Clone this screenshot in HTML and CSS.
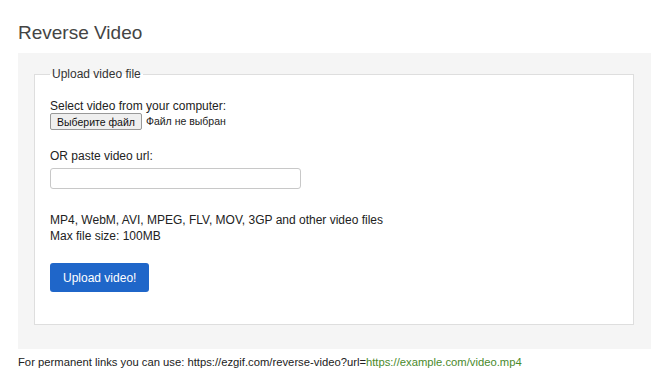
FILE: index.html
```html
<!DOCTYPE html>
<html lang="en">
<head>
  <meta charset="UTF-8" />
  <meta name="viewport" content="width=device-width, initial-scale=1.0" />
  <title>Reverse Video</title>
  <link rel="stylesheet" href="styles.css">
</head>
<body>
  <h1>Reverse Video</h1>
  <div class="panel">
    <fieldset>
      <legend>Upload video file</legend>
      <p class="label">Select video from your computer:</p>
      <div class="file-row">
        <button type="button" class="file-btn">Выберите файл</button>
        <span class="file-name">Файл не выбран</span>
      </div>
      <p class="label url-label">OR paste video url:</p>
      <input type="text" class="url-input" />
      <p class="formats">MP4, WebM, AVI, MPEG, FLV, MOV, 3GP and other video files<br>Max file size: 100MB</p>
      <button type="submit" class="upload-btn">Upload video!</button>
    </fieldset>
  </div>
  <p class="permalink">For permanent links you can use: https://ezgif.com/reverse-video?url=<a href="#">https://example.com/video.mp4</a></p>
</body>
</html>
```

FILE: styles.css
```css
html, body {
  margin: 0;
  padding: 0;
  background: #fff;
  font-family: 'Liberation Sans', Arial, sans-serif;
  font-size: 12px;
  color: #222;
}
body {
  padding: 0 13px 0 18px;
}
h1 {
  margin: 21px 0 9px;
  font-size: 19px;
  line-height: 23px;
  font-weight: normal;
  color: #444;
}
.panel {
  background-color: #f5f5f5;
  padding: 14px 17px 24px 16px;
}
fieldset {
  margin: 0;
  padding: 18px 15px 32px;
  border: 1px solid #dedede;
  background-color: #fff;
}
legend {
  padding: 0 2px;
  line-height: 14px;
  color: #333;
}
.label {
  margin: 0;
  line-height: 14px;
}
.file-row {
  display: flex;
  align-items: center;
  gap: 4px;
}
.file-btn {
  height: 17px;
  padding: 0 6px;
  font-family: inherit;
  font-size: 10.5px;
  color: #111;
  background-color: #efefef;
  border: 1px solid #999;
  border-radius: 2px;
}
.file-name {
  font-size: 10.5px;
  line-height: 17px;
}
.url-label {
  margin-top: 19px;
}
.url-input {
  display: block;
  box-sizing: border-box;
  width: 251px;
  height: 21px;
  margin-top: 5px;
  border: 1px solid #c8c8c8;
  border-radius: 3px;
  background: #fff;
}
.formats {
  margin: 23px 0 0;
  line-height: 16px;
}
.upload-btn {
  display: block;
  height: 29px;
  margin-top: 19px;
  padding: 0 13px;
  font-family: inherit;
  font-size: 12px;
  color: #fff;
  background-color: #1f66c9;
  border: none;
  border-radius: 3px;
}
.permalink {
  margin: 6px 0 0;
  font-size: 11.25px;
  line-height: 14px;
}
.permalink a {
  color: #4a8a2c;
  text-decoration: none;
}
```
